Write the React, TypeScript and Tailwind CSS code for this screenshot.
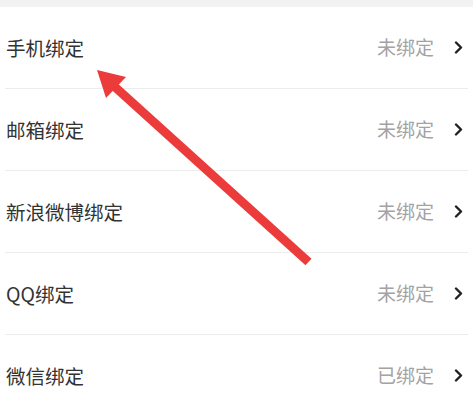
import React from 'react';

const rows = [
  { label: '手机绑定', status: '未绑定' },
  { label: '邮箱绑定', status: '未绑定' },
  { label: '新浪微博绑定', status: '未绑定' },
  { label: 'QQ绑定', status: '未绑定' },
  { label: '微信绑定', status: '已绑定' },
];

const Chevron: React.FC = () => (
  <svg width="9" height="13" viewBox="0 0 9 13" className="ml-[20px]">
    <path d="M2 1.5 L7 6.5 L2 11.5" fill="none" stroke="#222" strokeWidth="2.4" strokeLinecap="round" strokeLinejoin="round" />
  </svg>
);

const BindRow: React.FC<{ label: string; status: string }> = ({ label, status }) => (
  <div className="h-[82px] mx-[5px] flex items-center border-b border-[#ececec]">
    <span className="pl-[1px] text-[19.5px] text-[#333]">{label}</span>
    <div className="ml-auto flex items-center pr-[5px]">
      <span className="text-[19px] text-[#a3a3a3]">{status}</span>
      <Chevron />
    </div>
  </div>
);

export default function App() {
  return (
    <div
      className="relative w-[473px] h-[401px] overflow-hidden bg-white"
      style={{ fontFamily: '"Noto Sans CJK SC", "Noto Sans", sans-serif' }}
    >
      <div className="h-[7px] bg-[#f2f2f2]" />
      {rows.map(r => (
        <BindRow key={r.label} label={r.label} status={r.status} />
      ))}
      <svg className="absolute left-0 top-0 pointer-events-none" width="473" height="401">
        <line x1="115" y1="87" x2="308.5" y2="262" stroke="#ec3b3b" strokeWidth="9" />
        <polygon points="97,70 126,77 106,98" fill="#ec3b3b" />
      </svg>
    </div>
  );
}
